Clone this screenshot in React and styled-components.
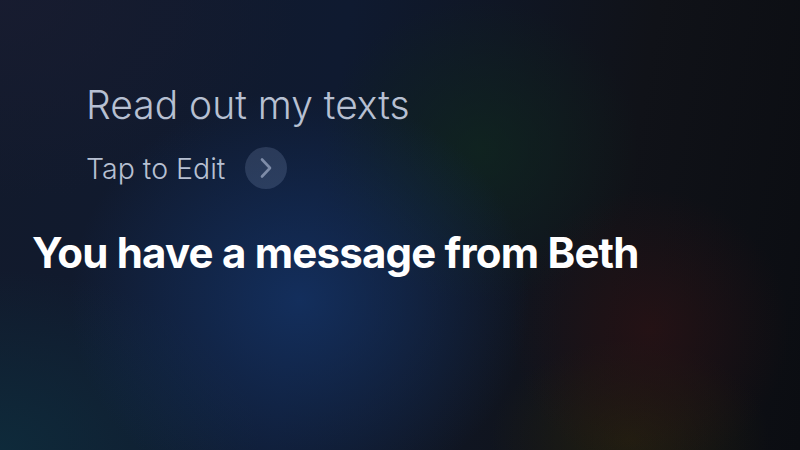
import React from 'react';
import styled, { createGlobalStyle } from 'styled-components';

const Global = createGlobalStyle`
  html, body { margin: 0; padding: 0; }
  body { background: #0b0f16; }
`;

const Screen = styled.div`
  width: 800px;
  height: 450px;
  overflow: hidden;
  box-sizing: border-box;
  padding: 82px 0 0 32px;
  display: flex;
  flex-direction: column;
  font-family: Inter, Roboto, "Liberation Sans", sans-serif;
  background:
    radial-gradient(ellipse 230px 210px at 300px 300px, rgba(20, 50, 100, 0.85), rgba(20, 50, 100, 0) 100%),
    radial-gradient(ellipse 160px 150px at 480px 150px, rgba(16, 40, 30, 0.7), rgba(16, 40, 30, 0) 100%),
    radial-gradient(ellipse 140px 140px at 650px 330px, rgba(45, 18, 20, 0.7), rgba(45, 18, 20, 0) 100%),
    radial-gradient(ellipse 140px 100px at 630px 440px, rgba(40, 36, 14, 0.7), rgba(40, 36, 14, 0) 100%),
    radial-gradient(ellipse 260px 180px at 0px 450px, rgba(14, 44, 60, 0.9), rgba(14, 44, 60, 0) 100%),
    radial-gradient(ellipse 300px 200px at 0px 0px, rgba(24, 28, 48, 0.9), rgba(24, 28, 48, 0) 100%),
    linear-gradient(100deg, #121a2c 0%, #0f1a30 40%, #101218 75%, #0b0d12 100%);
`;

const Query = styled.div`
  margin-left: 54px;
  font-size: 39px;
  font-weight: 300;
  color: #b7c0d2;
  line-height: 46px;
`;

const EditRow = styled.div`
  margin-left: 54px;
  margin-top: 19px;
  display: flex;
  align-items: center;
  gap: 20px;
`;

const EditLabel = styled.span`
  font-size: 28.5px;
  font-weight: 300;
  color: #b7c0d2;
`;

const Chevron = styled.button`
  width: 42px;
  height: 42px;
  border-radius: 50%;
  border: none;
  padding: 0;
  display: flex;
  align-items: center;
  justify-content: center;
  background: rgba(150, 170, 210, 0.2);
`;

const Answer = styled.div`
  margin-top: 40px;
  font-size: 42px;
  line-height: 48px;
  font-weight: 700;
  color: #ffffff;
  letter-spacing: -0.8px;
`;

export default function App() {
  return (
    <>
      <Global />
      <Screen>
        <Query>Read out my texts</Query>
        <EditRow>
          <EditLabel>Tap to Edit</EditLabel>
          <Chevron>
            <svg width="16" height="22" viewBox="0 0 16 22">
              <path d="M4 2.5 L12 11 L4 19.5" fill="none" stroke="#7e8ca8" strokeWidth="2.6" strokeLinecap="round" strokeLinejoin="round" />
            </svg>
          </Chevron>
        </EditRow>
        <Answer>You have a message from Beth</Answer>
      </Screen>
    </>
  );
}
